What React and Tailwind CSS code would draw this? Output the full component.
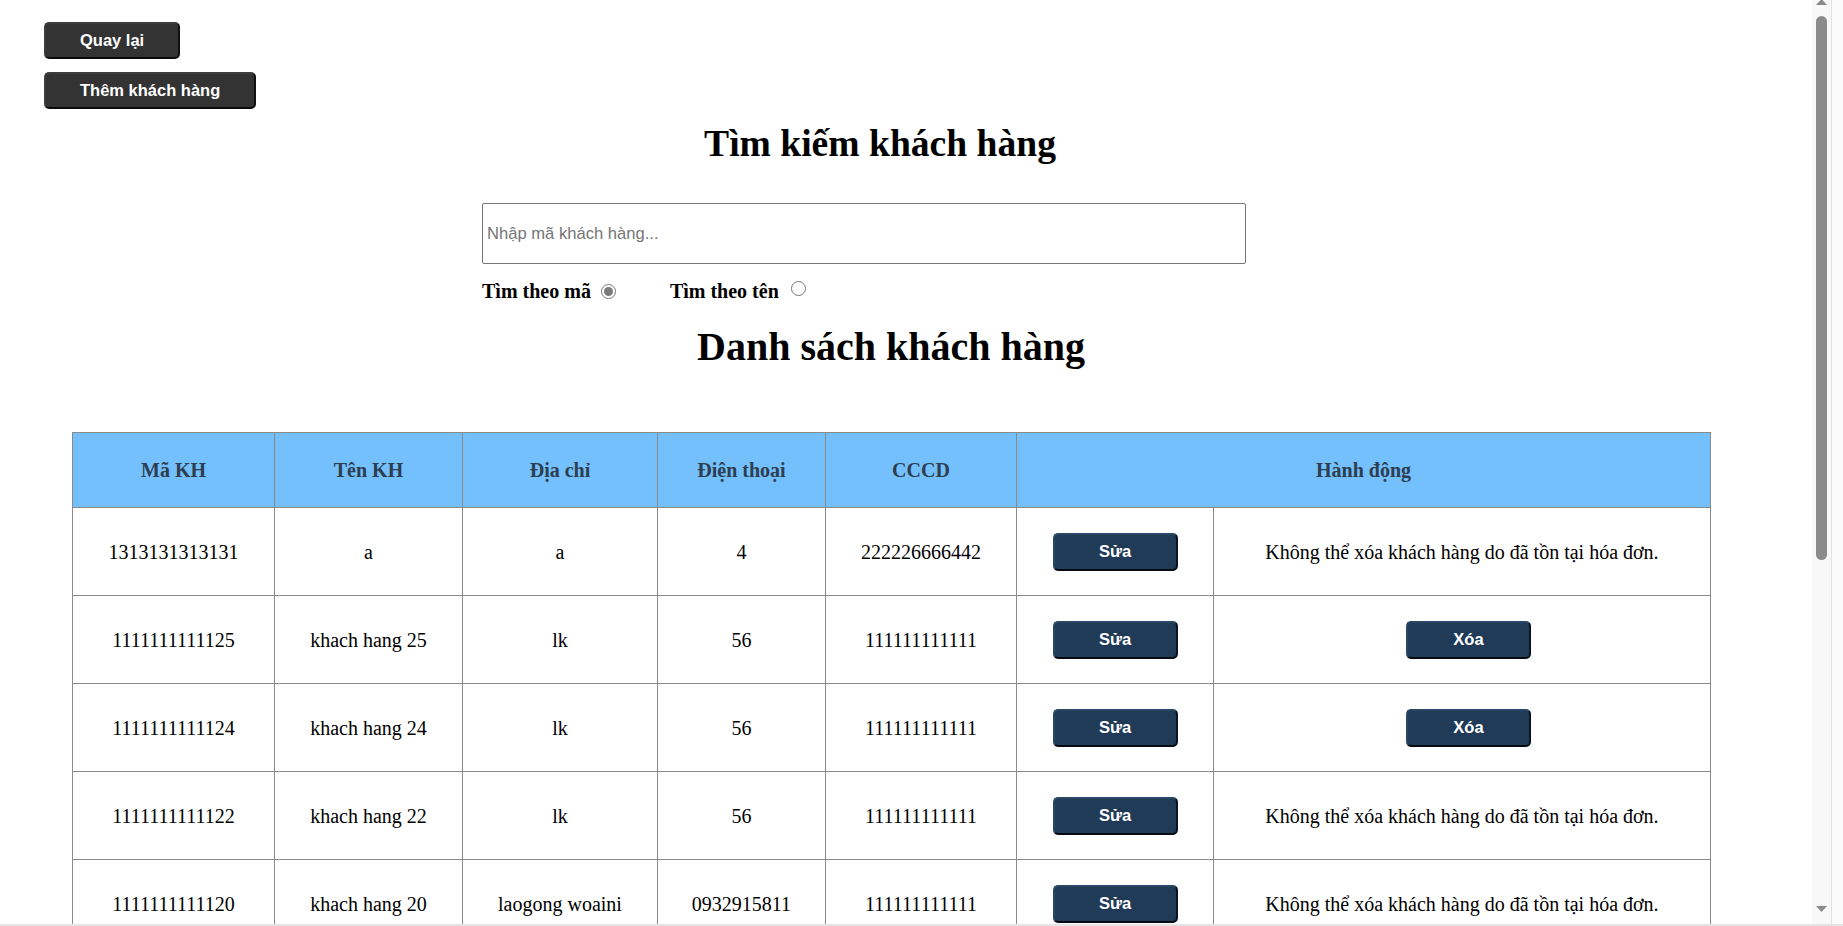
import React from "react";

const serif = { fontFamily: '"Liberation Serif", "Times New Roman", serif' };
const sans = { fontFamily: '"Liberation Sans", Arial, sans-serif' };

const NO_DELETE = "Không thể xóa khách hàng do đã tồn tại hóa đơn.";

const customers = [
  { id: "1313131313131", name: "a", addr: "a", phone: "4", cccd: "222226666442", canDelete: false },
  { id: "1111111111125", name: "khach hang 25", addr: "lk", phone: "56", cccd: "111111111111", canDelete: true },
  { id: "1111111111124", name: "khach hang 24", addr: "lk", phone: "56", cccd: "111111111111", canDelete: true },
  { id: "1111111111122", name: "khach hang 22", addr: "lk", phone: "56", cccd: "111111111111", canDelete: false },
  { id: "1111111111120", name: "khach hang 20", addr: "laogong woaini", phone: "0932915811", cccd: "111111111111", canDelete: false },
];

function DarkButton({ children }) {
  return (
    <button
      style={sans}
      className="h-[37px] px-[34px] rounded-[5px] bg-[#333333] text-white font-bold text-[16.5px] leading-none border-2 border-t-[#3c3c3c] border-l-[#3c3c3c] border-b-[#0a0a0a] border-r-[#111111]"
    >
      {children}
    </button>
  );
}

function ActionButton({ children, className = "" }) {
  return (
    <button
      style={sans}
      className={
        "w-[125px] h-[38px] rounded-[5px] bg-[#1f3b58] text-white font-bold text-[16.5px] leading-none border-2 border-t-[#2a4866] border-l-[#2a4866] border-b-[#050a10] border-r-[#0b1520] " +
        className
      }
    >
      {children}
    </button>
  );
}

function Radio({ checked }) {
  return (
    <span className="inline-flex items-center justify-center w-[15px] h-[15px] rounded-full border border-[#767676] bg-white">
      {checked && <span className="w-[9px] h-[9px] rounded-full bg-[#7a7a7a]" />}
    </span>
  );
}

function Scrollbar() {
  return (
    <div className="w-[31px] h-full flex">
      <div className="w-[19px] h-full bg-[#f8f8f8] flex flex-col items-center">
        <svg width="11" height="6" viewBox="0 0 11 6" className="-mt-[1px]">
          <path d="M0 6 L5.5 0 L11 6 Z" fill="#8a8a8a" />
        </svg>
        <div className="mt-[11px] w-[11px] h-[544px] rounded-full bg-[#8b8b8b]" />
        <div className="flex-1" />
        <svg width="11" height="6" viewBox="0 0 11 6" className="mb-[12px]">
          <path d="M0 0 L11 0 L5.5 6 Z" fill="#8a8a8a" />
        </svg>
      </div>
      <div className="w-[1px] h-full bg-[#e2e2e2]" />
      <div className="flex-1 h-full bg-[#fbfbfb]" />
    </div>
  );
}

export default function App() {
  const cell = "border border-[#8a8a8a] text-center align-middle";
  return (
    <div className="w-[1843px] h-[926px] overflow-hidden bg-white flex flex-col">
      <div className="flex h-[924px]">
        <main className="w-[1812px] h-full overflow-hidden text-black">
          {/* top navigation buttons */}
          <div className="pl-[44px] pt-[22px] flex flex-col items-start gap-[13px]">
            <DarkButton>Quay lại</DarkButton>
            <DarkButton>Thêm khách hàng</DarkButton>
          </div>

          {/* search */}
          <h1
            style={serif}
            className="ml-[44px] w-[1672px] mt-[13px] text-center font-bold text-[37.6px] leading-[44px]"
          >
            Tìm kiếm khách hàng
          </h1>

          <div className="ml-[482px] w-[764px] mt-[37px]">
            <input
              type="text"
              placeholder="Nhập mã khách hàng..."
              style={sans}
              className="block w-full h-[61px] px-[4px] border border-[#767676] rounded-[2px] text-[16.6px] placeholder:text-[#757575] outline-none"
            />
            <div style={serif} className="mt-[16px] flex items-center h-[22px] font-bold text-[20px] leading-[22px]">
              <span>Tìm theo mã</span>
              <span className="ml-[10px] -mt-[5px]">
                <Radio checked />
              </span>
              <span className="ml-[54px]">Tìm theo tên</span>
              <span className="ml-[12px] -mt-[5px]">
                <Radio />
              </span>
            </div>
          </div>

          {/* customer list */}
          <section className="ml-[72px] w-[1638px]">
            <h2
              style={serif}
              className="mt-[23px] text-center font-bold text-[40px] leading-[44px]"
            >
              Danh sách khách hàng
            </h2>

            <table
              style={serif}
              className="mt-[63px] w-[1638px] table-fixed border-collapse text-[20px]"
            >
              <colgroup>
                <col className="w-[202px]" />
                <col className="w-[188px]" />
                <col className="w-[195px]" />
                <col className="w-[168px]" />
                <col className="w-[191px]" />
                <col className="w-[197px]" />
                <col className="w-[497px]" />
              </colgroup>
              <thead>
                <tr className="h-[75px] bg-[#74c0fc] text-[#2c3e50]">
                  <th className={cell + " font-bold"}>Mã KH</th>
                  <th className={cell + " font-bold"}>Tên KH</th>
                  <th className={cell + " font-bold"}>Địa chỉ</th>
                  <th className={cell + " font-bold"}>Điện thoại</th>
                  <th className={cell + " font-bold"}>CCCD</th>
                  <th className={cell + " font-bold"} colSpan={2}>
                    Hành động
                  </th>
                </tr>
              </thead>
              <tbody>
                {customers.map((c) => (
                  <tr key={c.id} className="h-[88px]">
                    <td className={cell}>{c.id}</td>
                    <td className={cell}>{c.name}</td>
                    <td className={cell}>{c.addr}</td>
                    <td className={cell}>{c.phone}</td>
                    <td className={cell}>{c.cccd}</td>
                    <td className={cell}>
                      <ActionButton>Sửa</ActionButton>
                    </td>
                    <td className={cell}>
                      {c.canDelete ? (
                        <ActionButton className="ml-[13px]">Xóa</ActionButton>
                      ) : (
                        NO_DELETE
                      )}
                    </td>
                  </tr>
                ))}
              </tbody>
            </table>
          </section>
        </main>
        <Scrollbar />
      </div>
      <div className="h-[2px] bg-[#e4e4e4]" />
    </div>
  );
}
